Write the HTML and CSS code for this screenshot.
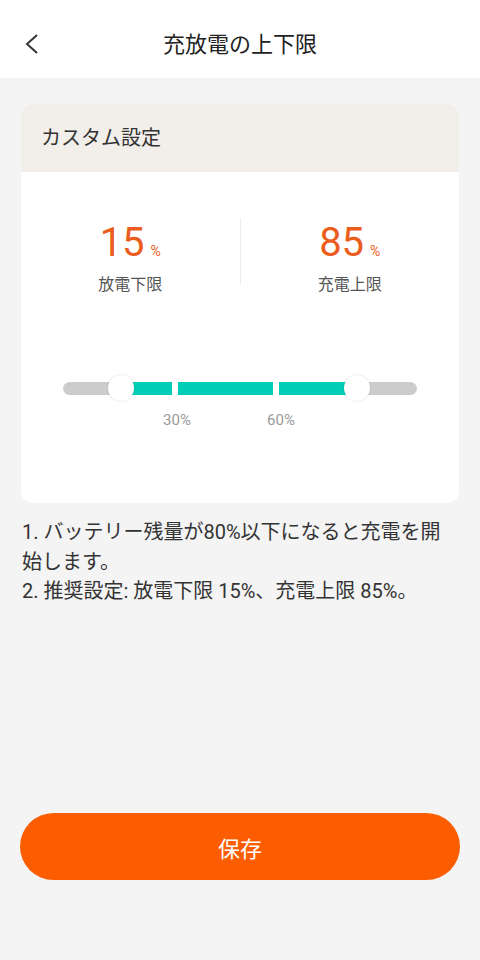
FILE: index.html
```html
<!DOCTYPE HTML>
<html lang="ja">
<head>
  <meta charset="UTF-8">
  <title>充放電の上下限</title>
  <link rel="stylesheet" href="styles.css">
</head>
<body>

  <header class="topbar">
    <button class="back" aria-label="戻る">
      <svg width="14" height="20" viewBox="0 0 14 20"><path d="M12 1 L2 10 L12 19" fill="none" stroke="#333" stroke-width="2"/></svg>
    </button>
    <h1>充放電の上下限</h1>
  </header>

  <main class="content">
    <section class="card">
      <div class="card-head">カスタム設定</div>

      <div class="limits">
        <div class="limit">
          <div class="value">15<span class="unit">%</span></div>
          <div class="label">放電下限</div>
        </div>
        <div class="divider"></div>
        <div class="limit">
          <div class="value">85<span class="unit">%</span></div>
          <div class="label">充電上限</div>
        </div>
      </div>

      <div class="slider">
        <div class="track">
          <div class="fill">
            <span class="seg seg-a"></span>
            <span class="seg seg-b"></span>
            <span class="seg seg-c"></span>
          </div>
          <span class="thumb thumb-low"></span>
          <span class="thumb thumb-high"></span>
        </div>
        <div class="ticks">
          <span class="tick tick-30">30%</span>
          <span class="tick tick-60">60%</span>
        </div>
      </div>
    </section>

    <div class="notes">
      <p>1. バッテリー残量が80%以下になると充電を開始します。</p>
      <p>2. 推奨設定: 放電下限 15%、充電上限 85%。</p>
    </div>

    <button class="save">保存</button>
  </main>

</body>
</html>
```

FILE: styles.css
```css
html, body {
  margin: 0;
  height: 100%;
}
body {
  font-family: Roboto, "Noto Sans CJK JP", sans-serif;
  background-color: #f4f4f4;
  color: #333;
  display: flex;
  flex-direction: column;
}

.topbar {
  height: 78px;
  background-color: #fff;
  display: flex;
  align-items: center;
  justify-content: center;
  position: relative;
  padding-top: 12px;
  box-sizing: border-box;
}
.topbar h1 {
  margin: 0;
  font-size: 22px;
  font-weight: 400;
  line-height: 30px;
  color: #222;
}
.back {
  position: absolute;
  left: 22px;
  top: 34px;
  border: 0;
  background: none;
  padding: 0;
  width: 20px;
  height: 20px;
}

.content {
  flex: 1;
  display: flex;
  flex-direction: column;
  padding: 26px 20px 80px;
}

.card {
  margin: 0 1px;
  background-color: #fff;
  border-radius: 12px;
  overflow: hidden;
  padding-bottom: 73px;
}
.card-head {
  height: 68px;
  background-color: #f2eeea;
  font-size: 20px;
  line-height: 68px;
  padding-left: 20px;
  color: #333;
}

.limits {
  display: flex;
  padding-top: 46px;
}
.limit {
  flex: 1;
  text-align: center;
}
.value {
  font-size: 40px;
  line-height: 50px;
  color: #eb5d1c;
}
.unit {
  font-size: 14px;
  margin-left: 6px;
}
.label {
  margin-top: -2px;
  font-size: 16px;
  line-height: 22px;
  color: #555;
}
.divider {
  width: 1px;
  height: 66px;
  background-color: #ececec;
}

.slider {
  margin: 86px 42px 0;
}
.track {
  position: relative;
  height: 13px;
  border-radius: 7px;
  background-color: #cccccc;
}
.fill {
  position: absolute;
  left: 58px;
  width: 236px;
  top: 0;
  bottom: 0;
  display: flex;
  gap: 6px;
  background-color: #fff;
}
.seg {
  background-color: #00cdb5;
}
.seg-a { width: 51px; }
.seg-b { width: 95px; }
.seg-c { flex: 1; }
.thumb {
  position: absolute;
  top: -7px;
  width: 26px;
  height: 26px;
  margin-left: -13px;
  border-radius: 50%;
  background-color: #fff;
  box-shadow: 0 0 2px rgba(0, 0, 0, 0.18);
}
.thumb-low { left: 58px; }
.thumb-high { left: 294px; }

.ticks {
  position: relative;
  height: 20px;
  margin-top: 15px;
}
.tick {
  position: absolute;
  top: 0;
  transform: translateX(-50%);
  font-size: 15px;
  line-height: 20px;
  color: #999;
}
.tick-30 { left: 114px; }
.tick-60 { left: 218px; }

.notes {
  margin-top: 15px;
  padding: 0 2px;
  font-size: 20px;
  line-height: 29.5px;
  color: #333;
}
.notes p {
  margin: 0;
}

.save {
  margin-top: auto;
  height: 67px;
  border: 0;
  border-radius: 34px;
  background-color: #fb5d00;
  color: #fff;
  font-family: inherit;
  font-size: 22px;
}
```
